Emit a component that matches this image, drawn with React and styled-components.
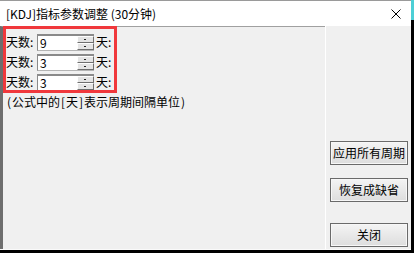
import React from 'react'
import styled, { createGlobalStyle } from 'styled-components'

const Global = createGlobalStyle`
  html, body { margin: 0; padding: 0; background: #000; }
  body { font-family: "Noto Sans CJK SC", "Noto Sans", sans-serif; font-size: 12px; color: #000; }
`

const Screen = styled.div`
  width: 414px;
  height: 253px;
  display: flex;
  background: #000;
  overflow: hidden;
`

const Window = styled.div`
  width: 411px;
  height: 250px;
  display: flex;
  flex-direction: column;
  background: #f0f0f0;
  border-bottom: 1px solid #fafafa;
  box-sizing: border-box;
`

const Edge = styled.div`
  width: 3px;
  height: 100%;
  background: linear-gradient(#4ccfd6 0 20px, #000 20px);
`

const TitleBar = styled.div`
  height: 26px;
  box-sizing: border-box;
  border-top: 1px solid #9a9a9a;
  background: #fff;
  display: flex;
  align-items: center;
  justify-content: space-between;
  padding: 0 10px 0 6px;
  font-size: 12px;
  line-height: 14px;
`

const Body = styled.div`
  flex: 1;
  display: flex;
  min-height: 0;
`

const Main = styled.div`
  width: 325px;
  box-sizing: border-box;
  border-left: 3px solid #6e6e6e;
  border-top: 1px solid #a0a0a0;
  padding: 5px 0 0 3px;
`

const ParamGroup = styled.div`
  position: relative;
  &::after {
    content: '';
    position: absolute;
    left: -3px;
    top: -6px;
    width: 114px;
    height: 67px;
    box-sizing: border-box;
    border: 3px solid #f0383c;
    pointer-events: none;
  }
`

const Row = styled.div`
  height: 20px;
  display: flex;
  align-items: center;
  white-space: nowrap;
`

const Label = styled.span`
  width: 31px;
  line-height: 14px;
`

const Field = styled.div`
  width: 40px;
  height: 17px;
  box-sizing: border-box;
  background: #fff;
  border-top: 2px solid #8a8a8a;
  border-left: 1px solid #8a8a8a;
  border-bottom: 1px solid #b4b4b4;
  padding-left: 2px;
  line-height: 14px;
  font-size: 12px;
`

const Spinner = styled.div`
  width: 17px;
  height: 17px;
  display: flex;
  flex-direction: column;
  border-top: 2px solid #8a8a8a;
  border-bottom: 1px solid #b4b4b4;
  box-sizing: border-box;
`

const SpinHalf = styled.div`
  flex: 1;
  position: relative;
  background: #e4e4e4;
  border: 1px solid #6f6f6f;
  border-top-color: #fdfdfd;
  border-left-color: #fdfdfd;
  &::after {
    content: '';
    position: absolute;
    left: 6px;
    top: 2px;
    width: 2px;
    height: 1px;
    background: #222;
  }
`

const Unit = styled.span`
  margin-left: 2px;
  line-height: 14px;
`

const Note = styled.div`
  margin-top: 2px;
  line-height: 15px;
  white-space: nowrap;
`

const Half = styled.span`
  display: inline-block;
  width: 6px;
  text-align: center;
`

const Side = styled.div`
  flex: 1;
  border-left: 1px solid #fff;
  display: flex;
  flex-direction: column;
  padding-left: 4px;
`

const Button = styled.button`
  width: 78px;
  height: 24px;
  margin-top: ${p => p.$top}px;
  padding: 0;
  box-sizing: border-box;
  border: 1px solid #6a6a6a;
  box-shadow: inset 0 0 0 1px #f7f7f7;
  background: linear-gradient(#f4f4f4, #dddddd);
  font-family: "Noto Sans CJK SC", "Noto Sans", sans-serif;
  font-size: 12px;
  line-height: 14px;
  color: #000;
`

const rows = ['9', '3', '3']

export default function App() {
  return (
    <Screen>
      <Global />
      <Window>
        <TitleBar>
          <span>[KDJ]指标参数调整 (30分钟)</span>
          <svg width="10" height="10" viewBox="0 0 10 10">
            <path d="M0.5 0.5 L9.5 9.5 M9.5 0.5 L0.5 9.5" stroke="#000" strokeWidth="1" fill="none" />
          </svg>
        </TitleBar>
        <Body>
          <Main>
            <ParamGroup>
              {rows.map((v, i) => (
                <Row key={i}>
                  <Label>天数:</Label>
                  <Field>{v}</Field>
                  <Spinner>
                    <SpinHalf />
                    <SpinHalf />
                  </Spinner>
                  <Unit>天:</Unit>
                </Row>
              ))}
            </ParamGroup>
            <Note>
              <Half>(</Half>公式中的<Half>[</Half>天<Half>]</Half>表示周期间隔单位<Half>)</Half>
            </Note>
          </Main>
          <Side>
            <Button $top={115}>应用所有周期</Button>
            <Button $top={13}>恢复成缺省</Button>
            <Button $top={21}>关闭</Button>
          </Side>
        </Body>
      </Window>
      <Edge />
    </Screen>
  )
}
